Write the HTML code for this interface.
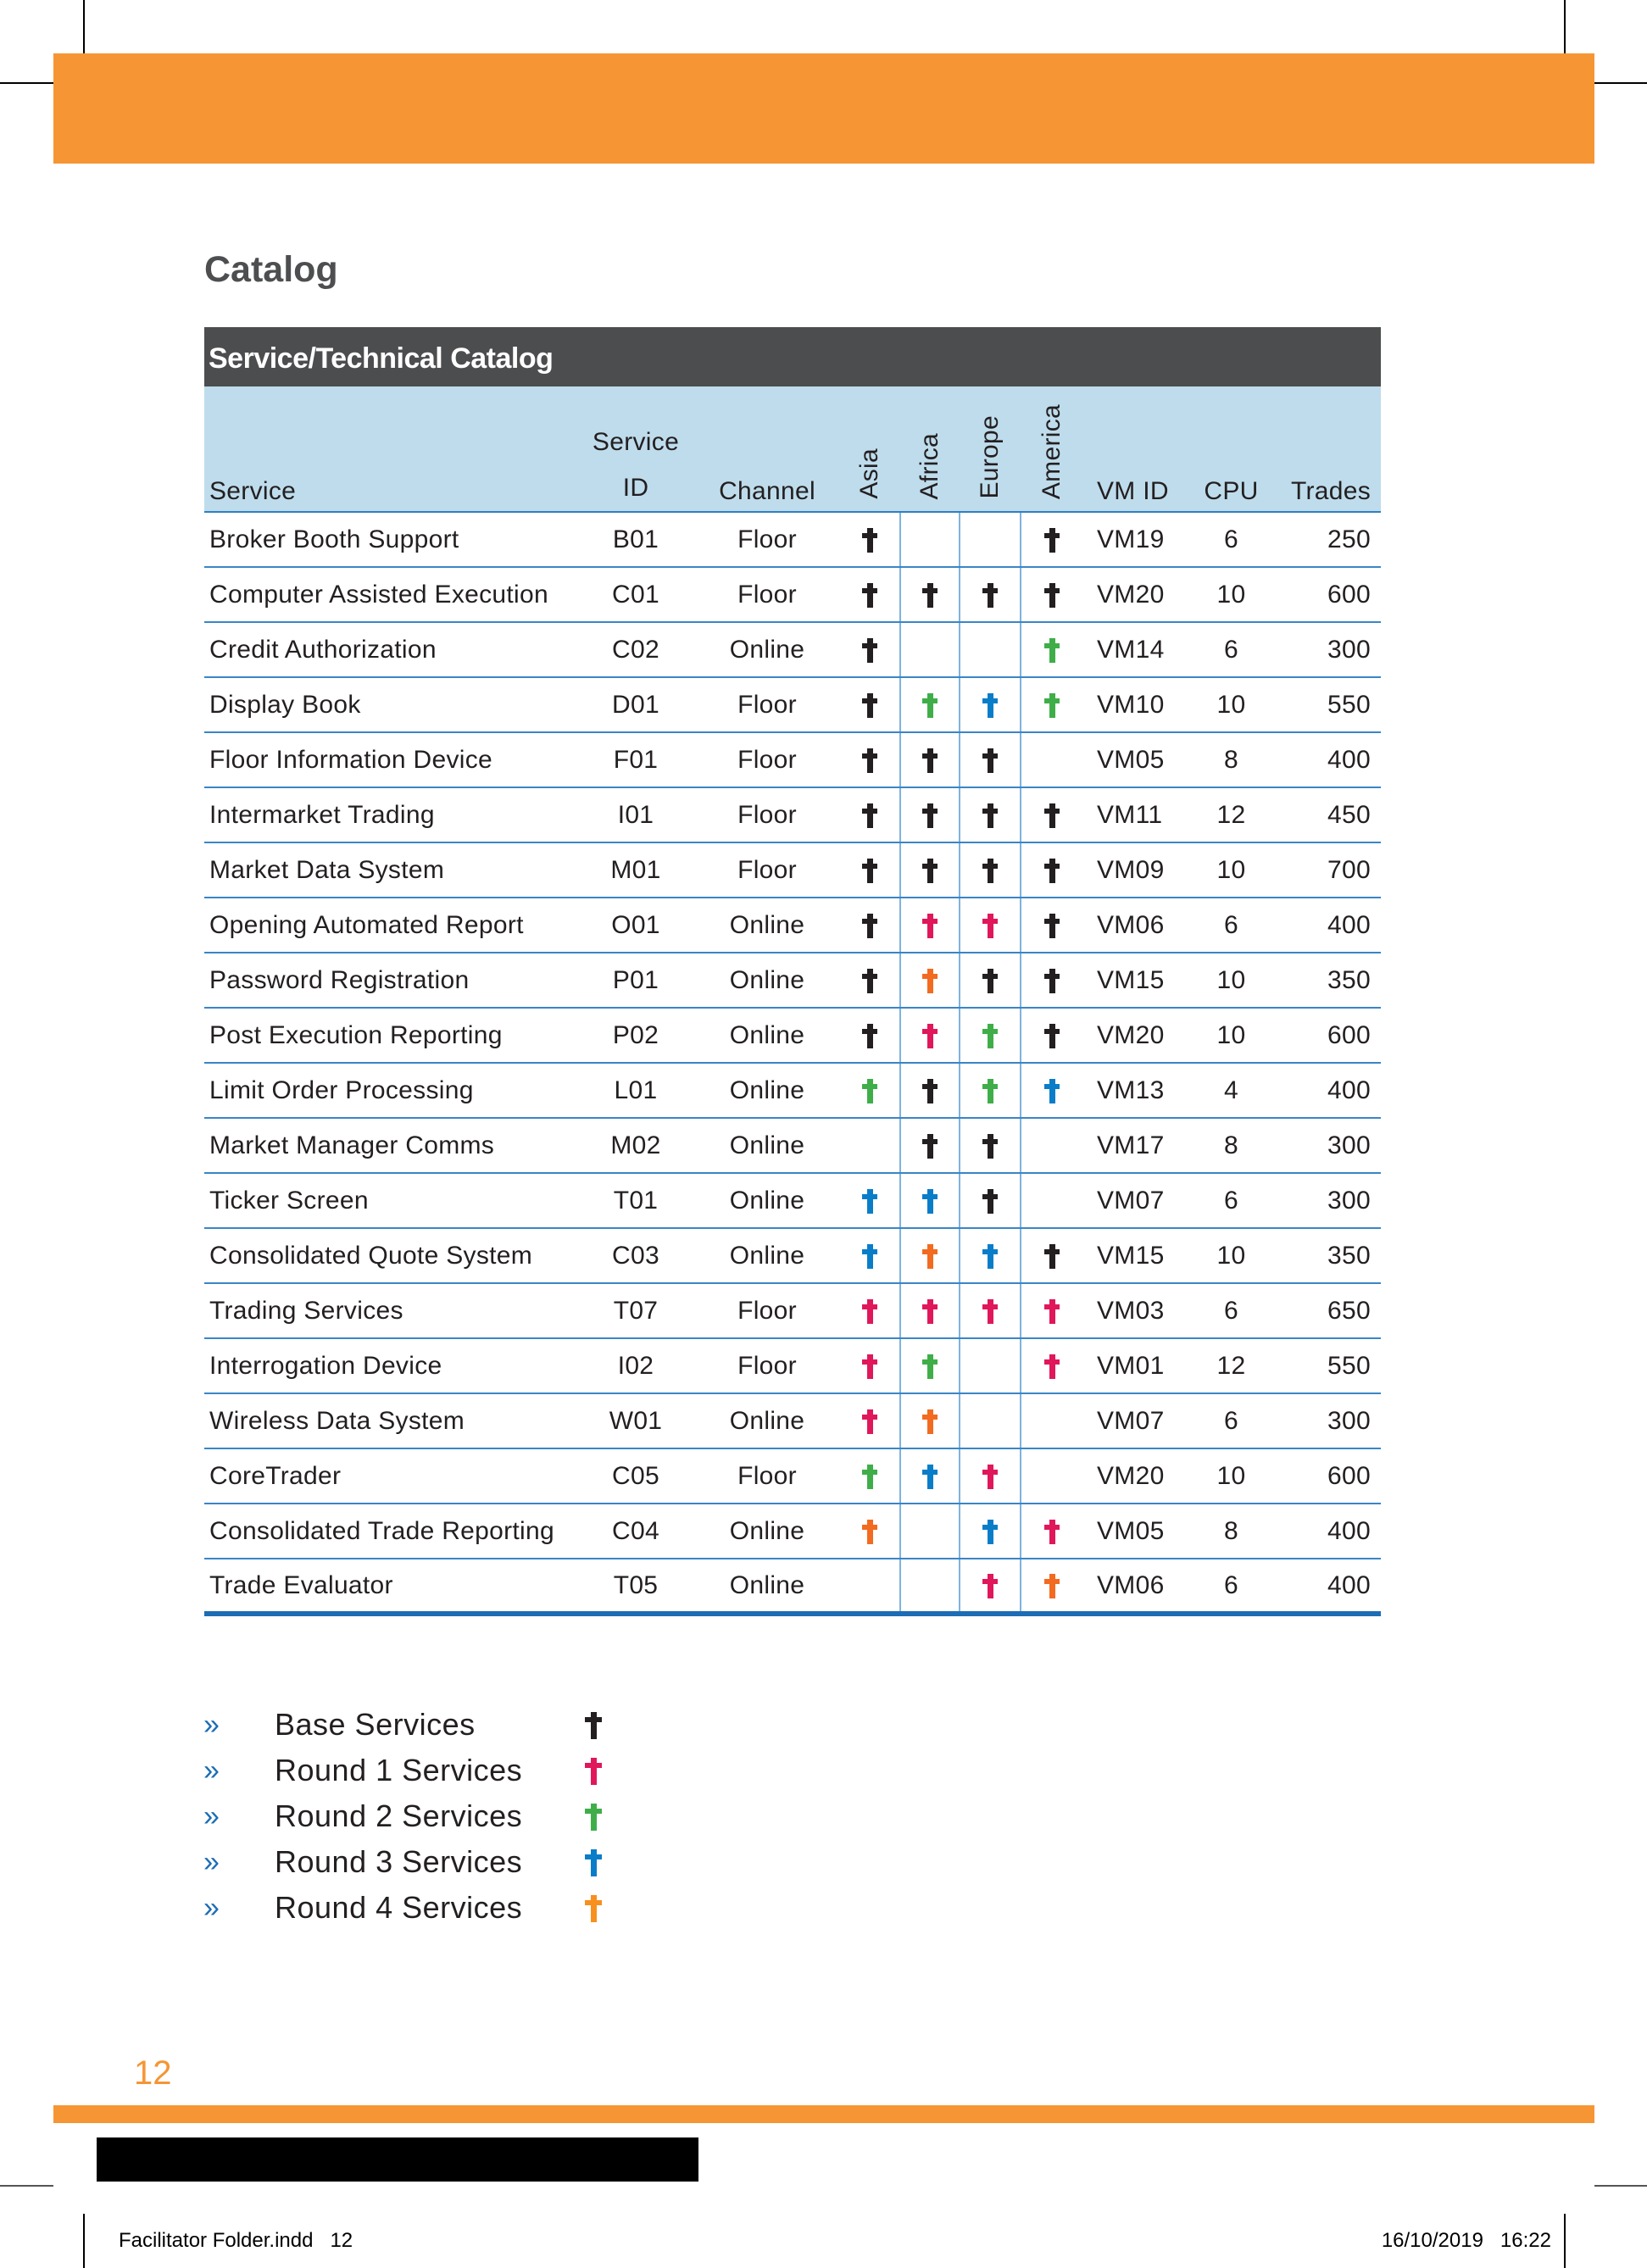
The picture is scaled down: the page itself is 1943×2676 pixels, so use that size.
<!DOCTYPE html>
<html><head><meta charset="utf-8"><style>
*{margin:0;padding:0;box-sizing:border-box}
body{width:1943px;height:2676px;position:relative;background:#fff;font-family:"Liberation Sans",sans-serif;color:#231f20;overflow:hidden}
.a{position:absolute}
.vl{position:absolute;width:2px;background:#000}
.hl{position:absolute;height:2px;background:#000}
table{position:absolute;left:241px;top:386px;width:1388px;border-collapse:collapse;table-layout:fixed}
td,th{font-weight:normal;font-size:30px;padding:0;white-space:nowrap;letter-spacing:0.3px}
tr.r td{height:65px;border-bottom:2px solid #3a85c6;vertical-align:middle}
tr.r:last-child td{border-bottom:6px solid #1c6db5}
td.c{text-align:center}
td.reg{text-align:center;border-left:2px solid #7fb3dd}
td.reg.f{border-left:none}
td.vm{padding-left:17px}
td.tr{text-align:right;padding-right:12px}
td.s{padding-left:6px}
.d{display:inline-block;width:18px;height:29px;position:relative;vertical-align:middle}
.d::before{content:"";position:absolute;left:6px;top:0;width:7px;height:29px;background:currentColor}
.d::after{content:"";position:absolute;left:0;top:6px;width:18px;height:6px;background:currentColor}
.k{color:#231f20}.p{color:#e0175a}.g{color:#3fae49}.b{color:#0a7dc9}.o{color:#f26b21}
.hdr th{background:#bedcec;height:148px;vertical-align:bottom;padding-bottom:6px;border-bottom:2px solid #2f7fc1;color:#231f20}
.rot{display:inline-block;writing-mode:vertical-rl;transform:rotate(180deg)}
.leg{position:absolute;left:246px;font-size:36px;color:#231f20;letter-spacing:0.5px}
.leg .ch{color:#1c6db5;font-size:34px;position:absolute;left:0;top:2px}
.leg .t{position:absolute;left:84px;top:0;white-space:nowrap}
.leg .d{position:absolute;left:450px;top:6px;width:20px;height:32px}
.leg .d::before{left:7px;width:7px;height:32px}
.leg .d::after{top:6px;width:20px;height:6px}
</style></head><body>
<div class="vl" style="left:98px;top:0;height:63px"></div>
<div class="vl" style="left:1845px;top:0;height:63px"></div>
<div class="hl" style="left:0;top:97px;width:63px"></div>
<div class="hl" style="left:1881px;top:97px;width:62px"></div>
<div class="a" style="left:63px;top:63px;width:1818px;height:130px;background:#f69533"></div>
<div class="a" style="left:241px;top:294px;font-size:43px;font-weight:bold;color:#4d4e50">Catalog</div>
<div class="a" style="left:241px;top:386px;width:1388px;height:70px;background:#4c4d4f"></div>
<div class="a" style="left:246px;top:404px;font-size:34px;font-weight:bold;color:#fff;letter-spacing:-0.5px">Service/Technical Catalog</div>
<table style="top:456px">
<colgroup><col style="width:439px"><col style="width:140px"><col style="width:170px"><col style="width:72px"><col style="width:70px"><col style="width:72px"><col style="width:73px"><col style="width:118px"><col style="width:115px"><col style="width:119px"></colgroup>
<tr class="hdr"><th style="text-align:left;padding-left:6px">Service</th><th style="text-align:center;line-height:54px;padding-bottom:0">Service<br>ID</th><th style="text-align:center">Channel</th><th><span class="rot">Asia</span></th><th><span class="rot">Africa</span></th><th><span class="rot">Europe</span></th><th><span class="rot">America</span></th><th style="text-align:left;padding-left:17px">VM ID</th><th style="text-align:center">CPU</th><th style="text-align:right;padding-right:12px">Trades</th></tr>
<tr class="r"><td class="s">Broker Booth Support</td><td class="c">B01</td><td class="c">Floor</td><td class="reg f"><i class="d k"></i></td><td class="reg"></td><td class="reg"></td><td class="reg"><i class="d k"></i></td><td class="vm">VM19</td><td class="c">6</td><td class="tr">250</td></tr>
<tr class="r"><td class="s">Computer Assisted Execution</td><td class="c">C01</td><td class="c">Floor</td><td class="reg f"><i class="d k"></i></td><td class="reg"><i class="d k"></i></td><td class="reg"><i class="d k"></i></td><td class="reg"><i class="d k"></i></td><td class="vm">VM20</td><td class="c">10</td><td class="tr">600</td></tr>
<tr class="r"><td class="s">Credit Authorization</td><td class="c">C02</td><td class="c">Online</td><td class="reg f"><i class="d k"></i></td><td class="reg"></td><td class="reg"></td><td class="reg"><i class="d g"></i></td><td class="vm">VM14</td><td class="c">6</td><td class="tr">300</td></tr>
<tr class="r"><td class="s">Display Book</td><td class="c">D01</td><td class="c">Floor</td><td class="reg f"><i class="d k"></i></td><td class="reg"><i class="d g"></i></td><td class="reg"><i class="d b"></i></td><td class="reg"><i class="d g"></i></td><td class="vm">VM10</td><td class="c">10</td><td class="tr">550</td></tr>
<tr class="r"><td class="s">Floor Information Device</td><td class="c">F01</td><td class="c">Floor</td><td class="reg f"><i class="d k"></i></td><td class="reg"><i class="d k"></i></td><td class="reg"><i class="d k"></i></td><td class="reg"></td><td class="vm">VM05</td><td class="c">8</td><td class="tr">400</td></tr>
<tr class="r"><td class="s">Intermarket Trading</td><td class="c">I01</td><td class="c">Floor</td><td class="reg f"><i class="d k"></i></td><td class="reg"><i class="d k"></i></td><td class="reg"><i class="d k"></i></td><td class="reg"><i class="d k"></i></td><td class="vm">VM11</td><td class="c">12</td><td class="tr">450</td></tr>
<tr class="r"><td class="s">Market Data System</td><td class="c">M01</td><td class="c">Floor</td><td class="reg f"><i class="d k"></i></td><td class="reg"><i class="d k"></i></td><td class="reg"><i class="d k"></i></td><td class="reg"><i class="d k"></i></td><td class="vm">VM09</td><td class="c">10</td><td class="tr">700</td></tr>
<tr class="r"><td class="s">Opening Automated Report</td><td class="c">O01</td><td class="c">Online</td><td class="reg f"><i class="d k"></i></td><td class="reg"><i class="d p"></i></td><td class="reg"><i class="d p"></i></td><td class="reg"><i class="d k"></i></td><td class="vm">VM06</td><td class="c">6</td><td class="tr">400</td></tr>
<tr class="r"><td class="s">Password Registration</td><td class="c">P01</td><td class="c">Online</td><td class="reg f"><i class="d k"></i></td><td class="reg"><i class="d o"></i></td><td class="reg"><i class="d k"></i></td><td class="reg"><i class="d k"></i></td><td class="vm">VM15</td><td class="c">10</td><td class="tr">350</td></tr>
<tr class="r"><td class="s">Post Execution Reporting</td><td class="c">P02</td><td class="c">Online</td><td class="reg f"><i class="d k"></i></td><td class="reg"><i class="d p"></i></td><td class="reg"><i class="d g"></i></td><td class="reg"><i class="d k"></i></td><td class="vm">VM20</td><td class="c">10</td><td class="tr">600</td></tr>
<tr class="r"><td class="s">Limit Order Processing</td><td class="c">L01</td><td class="c">Online</td><td class="reg f"><i class="d g"></i></td><td class="reg"><i class="d k"></i></td><td class="reg"><i class="d g"></i></td><td class="reg"><i class="d b"></i></td><td class="vm">VM13</td><td class="c">4</td><td class="tr">400</td></tr>
<tr class="r"><td class="s">Market Manager Comms</td><td class="c">M02</td><td class="c">Online</td><td class="reg f"></td><td class="reg"><i class="d k"></i></td><td class="reg"><i class="d k"></i></td><td class="reg"></td><td class="vm">VM17</td><td class="c">8</td><td class="tr">300</td></tr>
<tr class="r"><td class="s">Ticker Screen</td><td class="c">T01</td><td class="c">Online</td><td class="reg f"><i class="d b"></i></td><td class="reg"><i class="d b"></i></td><td class="reg"><i class="d k"></i></td><td class="reg"></td><td class="vm">VM07</td><td class="c">6</td><td class="tr">300</td></tr>
<tr class="r"><td class="s">Consolidated Quote System</td><td class="c">C03</td><td class="c">Online</td><td class="reg f"><i class="d b"></i></td><td class="reg"><i class="d o"></i></td><td class="reg"><i class="d b"></i></td><td class="reg"><i class="d k"></i></td><td class="vm">VM15</td><td class="c">10</td><td class="tr">350</td></tr>
<tr class="r"><td class="s">Trading Services</td><td class="c">T07</td><td class="c">Floor</td><td class="reg f"><i class="d p"></i></td><td class="reg"><i class="d p"></i></td><td class="reg"><i class="d p"></i></td><td class="reg"><i class="d p"></i></td><td class="vm">VM03</td><td class="c">6</td><td class="tr">650</td></tr>
<tr class="r"><td class="s">Interrogation Device</td><td class="c">I02</td><td class="c">Floor</td><td class="reg f"><i class="d p"></i></td><td class="reg"><i class="d g"></i></td><td class="reg"></td><td class="reg"><i class="d p"></i></td><td class="vm">VM01</td><td class="c">12</td><td class="tr">550</td></tr>
<tr class="r"><td class="s">Wireless Data System</td><td class="c">W01</td><td class="c">Online</td><td class="reg f"><i class="d p"></i></td><td class="reg"><i class="d o"></i></td><td class="reg"></td><td class="reg"></td><td class="vm">VM07</td><td class="c">6</td><td class="tr">300</td></tr>
<tr class="r"><td class="s">CoreTrader</td><td class="c">C05</td><td class="c">Floor</td><td class="reg f"><i class="d g"></i></td><td class="reg"><i class="d b"></i></td><td class="reg"><i class="d p"></i></td><td class="reg"></td><td class="vm">VM20</td><td class="c">10</td><td class="tr">600</td></tr>
<tr class="r"><td class="s">Consolidated Trade Reporting</td><td class="c">C04</td><td class="c">Online</td><td class="reg f"><i class="d o"></i></td><td class="reg"></td><td class="reg"><i class="d b"></i></td><td class="reg"><i class="d p"></i></td><td class="vm">VM05</td><td class="c">8</td><td class="tr">400</td></tr>
<tr class="r"><td class="s">Trade Evaluator</td><td class="c">T05</td><td class="c">Online</td><td class="reg f"></td><td class="reg"></td><td class="reg"><i class="d p"></i></td><td class="reg"><i class="d o"></i></td><td class="vm">VM06</td><td class="c">6</td><td class="tr">400</td></tr>
</table>

<div class="leg" style="top:2014px;left:240px"><span class="ch">»</span><span class="t">Base Services</span><i class="d" style="color:#231f20"></i></div>
<div class="leg" style="top:2068px;left:240px"><span class="ch">»</span><span class="t">Round 1 Services</span><i class="d" style="color:#e0175a"></i></div>
<div class="leg" style="top:2122px;left:240px"><span class="ch">»</span><span class="t">Round 2 Services</span><i class="d" style="color:#3fae49"></i></div>
<div class="leg" style="top:2176px;left:240px"><span class="ch">»</span><span class="t">Round 3 Services</span><i class="d" style="color:#0a7dc9"></i></div>
<div class="leg" style="top:2230px;left:240px"><span class="ch">»</span><span class="t">Round 4 Services</span><i class="d" style="color:#f7901e"></i></div>

<div class="a" style="left:158px;top:2424px;font-size:40px;color:#f69533">12</div>
<div class="a" style="left:63px;top:2484px;width:1818px;height:21px;background:#f69533"></div>
<div class="a" style="left:114px;top:2522px;width:710px;height:52px;background:#000"></div>
<div class="hl" style="left:0;top:2578px;width:63px;background:#555"></div>
<div class="hl" style="left:1881px;top:2578px;width:62px;background:#555"></div>
<div class="vl" style="left:98px;top:2612px;height:64px"></div>
<div class="vl" style="left:1845px;top:2612px;height:64px"></div>
<div class="a" style="left:140px;top:2630px;font-size:24px;color:#000;white-space:pre">Facilitator Folder.indd   12</div>
<div class="a" style="left:1620px;top:2630px;width:210px;text-align:right;font-size:24px;color:#000;white-space:pre">16/10/2019   16:22</div>
</body></html>
